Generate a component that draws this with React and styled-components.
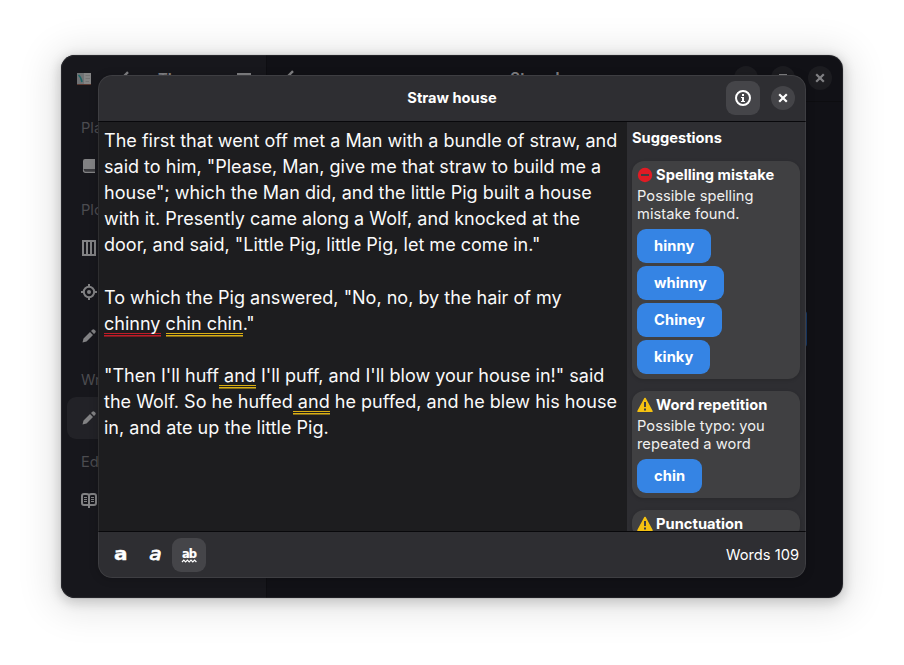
import React from "react";
import styled, { createGlobalStyle } from "styled-components";

const Global = createGlobalStyle`
  * { box-sizing: border-box; }
  html, body { margin: 0; background: #fff; }
  body { font: 14.67px/18px Inter, sans-serif; color: #fff; overflow: hidden; }
`;

const Desktop = styled.div`
  width: 904px;
  height: 665px;
  padding: 55px 61px 67px;
`;

const WindowFrame = styled.div`
  width: 782px;
  border-radius: 14px;
  box-shadow: 0 4px 36px 10px rgba(0, 0, 0, 0.1), 0 3px 12px 2px rgba(0, 0, 0, 0.16), 0 0 0 1px rgba(0, 0, 0, 0.06);
`;

const Window = styled.div`
  position: relative;
  display: flex;
  width: 782px;
  height: 543px;
  border-radius: 14px;
  background: #111116;
  overflow: hidden;
`;

const WindowEdge = styled.div`
  position: absolute;
  inset: 0;
  border-radius: 14px;
  box-shadow: inset 0 0 0 1px rgba(255, 255, 255, 0.07);
  pointer-events: none;
`;

const Sidebar = styled.aside`
  width: 205px;
  background: #17171c;
  color: #4c4c50;
`;

const SidebarHeader = styled.header`
  display: grid;
  grid-template-columns: 16px 16px 1fr 16px;
  align-items: center;
  column-gap: 25px;
  height: 47px;
  padding: 0 14px 0 15px;
  color: #808083;
  font-weight: 700;
`;

const NavList = styled.nav`
  padding: 9px 6px;
`;

const NavHeading = styled.div`
  height: 34px;
  padding: 8px 14px;
`;

const NavRow = styled.div`
  display: flex;
  align-items: center;
  height: 42px;
  margin-bottom: ${(p) => (p.$last ? "6px" : "2px")};
  padding-left: 14px;
  border-radius: 9px;
  color: #828284;
  background: ${(p) => (p.$active ? "#222227" : "transparent")};
`;

const Content = styled.main`
  flex: 1;
  border-left: 1px solid #0e0e12;
`;

const ContentHeader = styled.header`
  display: grid;
  grid-template-columns: 94px 1fr 98px;
  align-items: center;
  height: 47px;
  padding: 0 11px 0 15px;
  border-bottom: 1px solid #0d0d10;
  color: #808083;
  font-weight: 700;
  text-align: center;
`;

const WindowButtons = styled.div`
  display: flex;
  gap: 13px;
`;

const RoundButton = styled.button`
  display: grid;
  place-items: center;
  flex: none;
  width: 24px;
  height: 24px;
  padding: 0;
  border: 0;
  border-radius: 50%;
  color: ${(p) => (p.$dim ? "#808083" : "#fff")};
  background: ${(p) => (p.$dim ? "#1c1c20" : "#444448")};
`;

const AccentStrip = styled.div`
  width: 20px;
  height: 36px;
  margin: 209px 36px 0 auto;
  border-radius: 3px;
  background: #173866;
`;

const Dialog = styled.section`
  position: absolute;
  left: 37px;
  top: 20px;
  display: grid;
  grid-template-rows: 47px 409px 47px;
  width: 708px;
  height: 503px;
  border-radius: 14px;
  background: #2e2e32;
  box-shadow: 0 1px 8px 1px rgba(0, 0, 0, 0.16);
  overflow: hidden;

  &::after {
    content: "";
    position: absolute;
    inset: 0;
    border-radius: 14px;
    box-shadow: inset 0 0 0 1px rgba(255, 255, 255, 0.08);
    pointer-events: none;
  }
`;

const DialogHeader = styled.header`
  display: grid;
  grid-template-columns: 70px 1fr 70px;
  align-items: center;
  padding: 0 11px;
  border-bottom: 1px solid #08080b;
`;

const DialogTitle = styled.h1`
  margin: 0;
  font-size: 14.67px;
  line-height: 18px;
  font-weight: 700;
  text-align: center;
`;

const HeaderActions = styled.div`
  display: flex;
  align-items: center;
  justify-content: flex-end;
  gap: 11px;
`;

const ToolButton = styled.button`
  display: grid;
  place-items: center;
  width: 34px;
  height: 34px;
  padding: 0;
  border: 0;
  border-radius: 9px;
  color: #fff;
  background: ${(p) => (p.$active ? "#454549" : "transparent")};
`;

const DialogBody = styled.div`
  display: grid;
  grid-template-columns: 529px 1fr;
  min-height: 0;
`;

const Editor = styled.article`
  padding: 6px 0 0 6px;
  background: #1d1d1f;
  color: #fafafa;
  font-size: 18.04px;
  line-height: 26.1px;
  white-space: pre;
`;

const Mark = styled.span`
  padding-bottom: 3px;
  background: linear-gradient(
      to top,
      ${(p) => p.$soft} 0 1px,
      ${(p) => p.$color} 1px 2px,
      transparent 2px 3px,
      ${(p) => p.$color} 3px 4px,
      transparent 4px
    );
`;

const Suggestions = styled.aside`
  display: flex;
  flex-direction: column;
  gap: 12px;
  padding: 7px 5px 0;
  overflow: hidden;
`;

const SuggestionsTitle = styled.h2`
  margin: 0 0 2px;
  height: 18px;
  font-size: 14.67px;
  line-height: 18px;
  font-weight: 700;
`;

const Card = styled.div`
  display: flex;
  flex-direction: column;
  align-items: flex-start;
  flex: none;
  gap: 3px;
  width: 168px;
  padding: 5px;
  border-radius: 12px;
  background: #404042;
  box-shadow: 0 1px 3px 1px rgba(0, 0, 0, 0.1);
`;

const CardTitle = styled.h3`
  display: flex;
  align-items: center;
  gap: 3px;
  margin: 0;
  height: 18px;
  font-size: 14.67px;
  font-weight: 700;
  line-height: 18px;
  letter-spacing: 0.03px;
  white-space: nowrap;
`;

const CardText = styled.p`
  margin: 0 0 3px;
  color: #f0f0f0;
  line-height: 18px;
  letter-spacing: 0.04px;
  white-space: pre;
`;

const PillButton = styled.button`
  height: 34px;
  padding: 0 17px;
  border: 0;
  border-radius: 9px;
  background: #3584e4;
  color: #fff;
  font: 700 14.67px/18px Inter, sans-serif;
  letter-spacing: 0.08px;
`;

const DialogFooter = styled.footer`
  display: flex;
  align-items: center;
  justify-content: space-between;
  padding: 0 7px 0 6px;
  border-top: 1px solid #08080b;
`;

const FormatButtons = styled.div`
  display: flex;
`;

const Svg = styled.svg`
  display: block;
  flex: none;
`;

const Icon = ({ children, size = 16 }) => (
  <Svg width={size} height={size} viewBox="0 0 16 16" fill="none" stroke="currentColor" strokeWidth="2">
    {children}
  </Svg>
);

const CloseIcon = () => <Icon><path d="M4.2 4.2l7.6 7.6M11.8 4.2l-7.6 7.6" strokeWidth="2.2" /></Icon>;
const BackIcon = () => <Icon><path d="M11 1.2L4.2 8l6.8 6.8" strokeWidth="2.4" /></Icon>;
const MenuIcon = () => <Icon><path d="M1 3h14M1 8h14M1 13h14" /></Icon>;
const MaximizeIcon = () => <Icon><path d="M5 5h6v6H5z" /></Icon>;
const MinimizeIcon = () => <Icon><path d="M4 11h8" /></Icon>;

const InfoIcon = () => (
  <Icon>
    <circle cx="8" cy="8" r="7" />
    <path d="M7 4h2v2H7zM6 7h3v4h1v1H6v-1h1V8H6z" fill="currentColor" stroke="none" />
  </Icon>
);

const AppIcon = () => (
  <Icon>
    <path d="M1 3h14v11H1z" fill="#5b3931" stroke="none" />
    <path d="M1 2h7v11H1z" fill="#6f7274" stroke="none" />
    <path d="M8 2h7v11H8z" fill="#858585" stroke="none" />
    <path d="M2.500 4q2.500 2 3.500 7" stroke="#1d6566" strokeWidth="1.600" />
    <path d="M9.500 4.500H14M9.500 7.500H14M9.500 10.500H13" stroke="#747474" strokeWidth="1" />
  </Icon>
);

const BookIcon = () => (
  <Icon>
    <path d="M4 1h10v10H4.500Q3 11 2 12V3a2 2 0 0 1 2-2z" fill="currentColor" stroke="none" />
    <path d="M4.500 11H14v3H4.500a1.500 1.500 0 0 1 0-3z" fill="#3a3a3e" stroke="none" />
    <path d="M2.500 11.500v.8q0 2 2 2H14" strokeWidth="1.200" />
  </Icon>
);

const ColumnsIcon = () => <Icon><path d="M2 1h12v14H2zM6 1v14M10 1v14" /></Icon>;

const TargetIcon = () => (
  <Icon>
    <circle cx="8" cy="8" r="5.2" />
    <circle cx="8" cy="8" r="2" fill="currentColor" stroke="none" />
    <path d="M8 0v3M8 13v3M0 8h3M13 8h3" />
  </Icon>
);

const PencilIcon = () => (
  <Icon>
    <path d="M1.500 14.500l1-4L9 4l3 3-6.500 6.500zM10 3l1.300-1.300a1.500 1.500 0 0 1 2.100 0l.9.9a1.500 1.500 0 0 1 0 2.100L13 6z" fill="currentColor" stroke="none" />
  </Icon>
);

const OpenBookIcon = () => (
  <Icon>
    <path d="M8 14V3Q7 2 5 2H3Q1 2 1 4v7q0 2 2 2h10q2 0 2-2V4q0-2-2-2h-2Q9 2 8 3M8 12v4" />
    <path d="M3 5.500h3M3 7.500h3M3 9.500h3M10 5.500h3M10 7.500h3M10 9.500h3" strokeWidth="1" />
  </Icon>
);

const ErrorIcon = () => (
  <Icon>
    <circle cx="8" cy="8" r="7.200" fill="#e01b24" stroke="none" />
    <path d="M4 8h8" stroke="#404042" />
  </Icon>
);

const WarningIcon = () => (
  <Icon>
    <path d="M8 1.500L15 14.300H1z" fill="#f5c211" stroke="#f5c211" strokeWidth="1.600" strokeLinejoin="round" />
    <path d="M8 5v5M8 11.500v2" stroke="#404042" />
  </Icon>
);

const Glyph = styled.span`
  display: block;
  height: 16px;
  margin-top: -1px;
  font-family: "DejaVu Sans", sans-serif;
  font-weight: ${(p) => (p.$slanted ? 400 : 700)};
  font-style: ${(p) => (p.$slanted ? "oblique" : "normal")};
  font-size: 17.5px;
  line-height: 15px;
  transform: scaleX(1.15);
  -webkit-text-stroke: ${(p) => (p.$slanted ? "0.8px" : "0.3px")} currentColor;
`;

const SpellGlyph = styled.span`
  display: grid;
  justify-items: center;
  padding-top: 1px;
  font: 700 11.5px/10px "DejaVu Sans", sans-serif;
  letter-spacing: -0.9px;
  -webkit-text-stroke: 0.2px currentColor;
`;

const Squiggle = () => (
  <Svg width="16" height="4" viewBox="0 0 16 4" fill="none" stroke="currentColor" strokeWidth="1.200">
    <path d="M1 3l1.800-1.800L4.600 3l1.800-1.800L8.200 3 10 1.200 11.800 3l1.800-1.800L15.400 3" />
  </Svg>
);

const nav = [
  { title: "Plan", icons: [BookIcon] },
  { title: "Plot", icons: [ColumnsIcon, TargetIcon, PencilIcon] },
  { title: "Write", icons: [PencilIcon], active: true },
  { title: "Edit", icons: [OpenBookIcon] },
];

const issues = [
  { icon: ErrorIcon, title: "Spelling mistake", text: "Possible spelling\nmistake found.", fixes: ["hinny", "whinny", "Chiney", "kinky"] },
  { icon: WarningIcon, title: "Word repetition", text: "Possible typo: you\nrepeated a word", fixes: ["chin"] },
  { icon: WarningIcon, title: "Punctuation", text: "", fixes: [] },
];

const Err = (p) => <Mark $color="#c01c28" $soft="#7a1c22" {...p} />;
const Warn = (p) => <Mark $color="#d9ae14" $soft="#80691a" {...p} />;

export default function App() {
  return (
    <Desktop>
      <Global />
      <WindowFrame>
        <Window>
          <Sidebar>
            <SidebarHeader>
              <AppIcon />
              <BackIcon />
              <span>The</span>
              <MenuIcon />
            </SidebarHeader>
            <NavList>
              {nav.map((group) => (
                <React.Fragment key={group.title}>
                  <NavHeading>{group.title}</NavHeading>
                  {group.icons.map((RowIcon, i) => (
                    <NavRow key={i} $active={group.active} $last={i === group.icons.length - 1}>
                      <RowIcon />
                    </NavRow>
                  ))}
                </React.Fragment>
              ))}
            </NavList>
          </Sidebar>
          <Content>
            <ContentHeader>
              <BackIcon />
              <span>Straw house</span>
              <WindowButtons>
                <RoundButton $dim><MinimizeIcon /></RoundButton>
                <RoundButton $dim><MaximizeIcon /></RoundButton>
                <RoundButton $dim><CloseIcon /></RoundButton>
              </WindowButtons>
            </ContentHeader>
            <AccentStrip />
          </Content>
          <WindowEdge />
          <Dialog>
            <DialogHeader>
              <span />
              <DialogTitle>Straw house</DialogTitle>
              <HeaderActions>
                <ToolButton $active><InfoIcon /></ToolButton>
                <RoundButton><CloseIcon /></RoundButton>
              </HeaderActions>
            </DialogHeader>
            <DialogBody>
              <Editor>
                {"The first that went off met a Man with a bundle of straw, and\nsaid to him, \"Please, Man, give me that straw to build me a\nhouse\"; which the Man did, and the little Pig built a house\nwith it. Presently came along a Wolf, and knocked at the\ndoor, and said, \"Little Pig, little Pig, let me come in.\"\n\nTo which the Pig answered, \"No, no, by the hair of my\n"}
                <Err>chinny</Err> <Warn>chin chin</Warn>
                {".\"\n\n\"Then I'll huff"}
                <Warn> and</Warn>
                {" I'll puff, and I'll blow your house in!\" said\nthe Wolf. So he huffed"}
                <Warn> and</Warn>
                {" he puffed, and he blew his house\nin, and ate up the little Pig."}
              </Editor>
              <Suggestions>
                <SuggestionsTitle>Suggestions</SuggestionsTitle>
                {issues.map(({ icon: IssueIcon, title, text, fixes }) => (
                  <Card key={title}>
                    <CardTitle><IssueIcon />{title}</CardTitle>
                    {text && <CardText>{text}</CardText>}
                    {fixes.map((fix) => <PillButton key={fix}>{fix}</PillButton>)}
                  </Card>
                ))}
              </Suggestions>
            </DialogBody>
            <DialogFooter>
              <FormatButtons>
                <ToolButton><Glyph>a</Glyph></ToolButton>
                <ToolButton><Glyph $slanted>a</Glyph></ToolButton>
                <ToolButton $active><SpellGlyph>ab<Squiggle /></SpellGlyph></ToolButton>
              </FormatButtons>
              <span>Words 109</span>
            </DialogFooter>
          </Dialog>
        </Window>
      </WindowFrame>
    </Desktop>
  );
}
